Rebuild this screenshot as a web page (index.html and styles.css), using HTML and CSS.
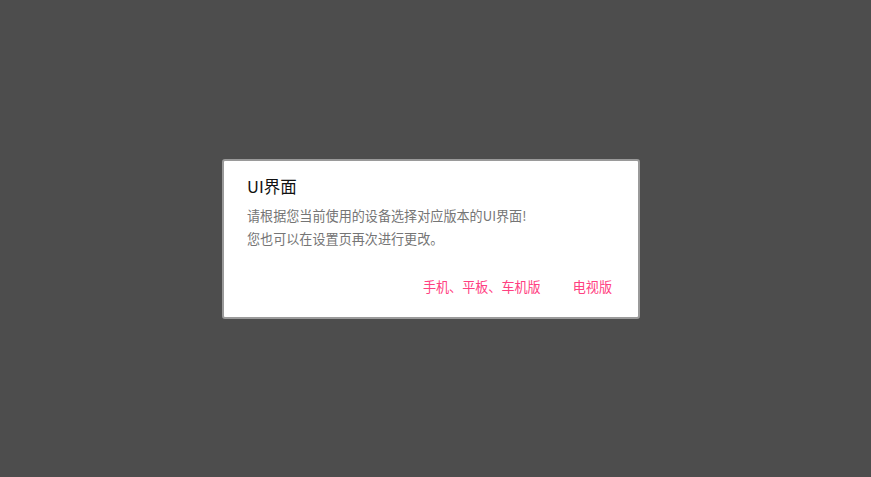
FILE: index.html
```html
<!DOCTYPE html>
<html lang="zh-CN">
<head>
<meta charset="utf-8">
<title>UI界面</title>
<link rel="stylesheet" href="styles.css">
</head>
<body>
<div class="screen">
  <div class="dialog">
    <h1 class="title">UI界面</h1>
    <p class="message">请根据您当前使用的设备选择对应版本的UI界面!<br>您也可以在设置页再次进行更改。</p>
    <div class="actions">
      <button class="btn">手机、平板、车机版</button>
      <button class="btn">电视版</button>
    </div>
  </div>
</div>
</body>
</html>
```
FILE: styles.css
```css
html, body {
  margin: 0;
  padding: 0;
  height: 100%;
}
body {
  background: #4d4d4d;
  font-family: "Noto Sans CJK SC", "Noto Sans", sans-serif;
}
.screen {
  height: 100%;
  display: flex;
  align-items: center;
  justify-content: center;
}
.dialog {
  box-sizing: border-box;
  width: 418px;
  height: 160px;
  margin-right: 9px;
  background: #ffffff;
  border: 2px solid #9a9a9a;
  border-radius: 3px;
  padding: 13px 24px 0 23px;
  display: flex;
  flex-direction: column;
}
.title {
  margin: 0;
  font-size: 16.5px;
  font-weight: 400;
  line-height: 24px;
  color: #111111;
}
.message {
  margin: 6px 0 0;
  font-size: 13.1px;
  line-height: 23px;
  color: #757575;
}
.actions {
  margin-top: 23px;
  display: flex;
  justify-content: flex-end;
  gap: 16px;
  margin-right: -6px;
}
.btn {
  background: none;
  border: 0;
  padding: 4px 8px;
  font-family: inherit;
  font-size: 13.1px;
  line-height: 20px;
  color: #ff4081;
  cursor: pointer;
}
```
